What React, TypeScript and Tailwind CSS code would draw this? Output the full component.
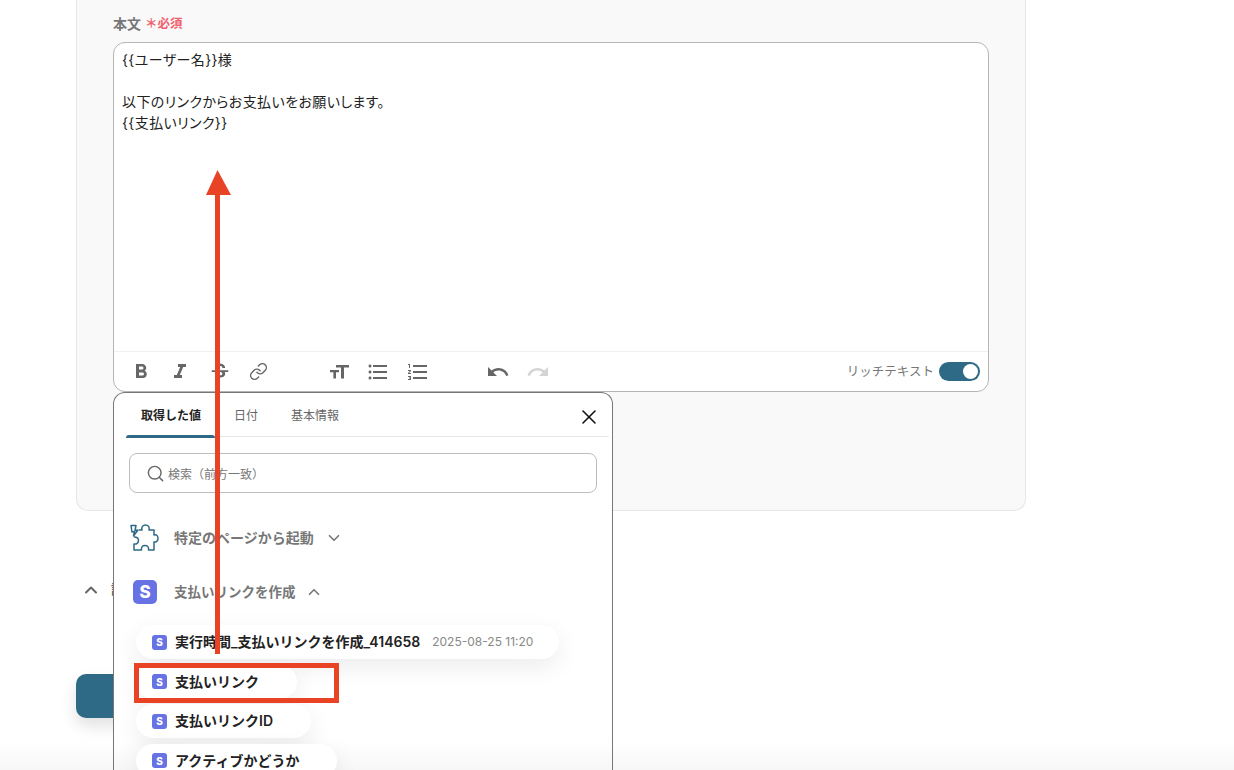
import { ChevronDown, ChevronUp, Link, Search, X } from 'lucide-react';
import {
    MdFormatBold,
    MdFormatItalic,
    MdFormatListBulleted,
    MdFormatListNumbered,
    MdRedo,
    MdStrikethroughS,
    MdUndo,
} from 'react-icons/md';

const fontClass = "font-['Inter','Noto_Sans_CJK_JP',sans-serif]";

function TextSizeIcon() {
    return (
        <svg width="20" height="20" viewBox="0 0 20 20" fill="#666">
            <path d="M7 3h13v2.600h-5v11h-3v-11H7z" />
            <path d="M1 8h9v2.300H7v6.300H4.400v-6.300H1z" />
        </svg>
    );
}

function PuzzleIcon() {
    return (
        <svg width="30" height="30" viewBox="0 0 30 30" fill="none" stroke="#2e6a85" strokeWidth="1.500" strokeLinejoin="round">
            <path d="M10 7H13C12 4 14 2 16.500 2C19 2 21 4 20 7H25V12C28 11 29 13.500 29 15.500C29 18 27 19.500 25 19V27H19.500C20 24 18.500 22.500 16 22.500C13.500 22.500 12 24 12.500 27H5V21C7.500 21.500 9.500 20 9.500 17.500C9.500 15 7.500 14 5 14" />
            <path d="M7 2.500H2L3 9L5.500 8.500L4.500 13L9 7L6 7.500Z" />
        </svg>
    );
}

function StripeBadge({ large }: { large?: boolean }) {
    if (large) {
        return (
            <span className="flex h-[24px] w-[24px] items-center justify-center rounded-[5px] bg-[#6772e5] text-[17px] font-extrabold leading-none text-white">
                S
            </span>
        );
    }
    return (
        <span className="flex h-[15px] w-[15px] shrink-0 items-center justify-center rounded-[3px] bg-[#6772e5] text-[10px] font-extrabold leading-none text-white">
            S
        </span>
    );
}

function ValuePill({ label, time }: { label: string; time?: string }) {
    return (
        <div className={`flex h-[34px] w-fit items-center rounded-full bg-white pl-[16px] shadow-[0_8px_24px_rgba(0,0,0,0.08)] ${time ? 'pr-[26px]' : 'pr-[38px]'}`}>
            <StripeBadge />
            <span className="ml-[8px] pb-[1px] text-[14px] font-semibold text-[#222]">{label}</span>
            {time && <span className="ml-[12px] text-[12px] text-[#888]">{time}</span>}
        </div>
    );
}

function ToolButton({ children, faded }: { children: React.ReactNode; faded?: boolean }) {
    return (
        <span className={`flex w-[39.500px] items-center justify-center ${faded ? 'text-[#d4d4d4]' : 'text-[#666]'}`}>
            {children}
        </span>
    );
}

export default function App() {
    return (
        <div className={`relative h-[770px] w-[1234px] overflow-hidden bg-white ${fontClass}`}>
            {/* Form card */}
            <div className="ml-[76px] h-[511px] w-[950px] rounded-b-[12px] border border-t-0 border-[#e6e6e6] bg-[#f9f9f9] pl-[36px] pt-[14px]">
                <div className="flex h-[18px] items-center text-[14px] font-semibold text-[#777]">
                    本文
                    <span className="ml-[4px] pt-[3px] text-[12.500px] font-semibold text-[#f0606c]">＊必須</span>
                </div>
                <div className="mt-[10px] flex h-[350px] w-[876px] flex-col rounded-[12px] border border-[#b5b5b5] bg-white">
                    <div className="flex-1 px-[8px] pt-[6px] text-[14px] leading-[21px] tracking-[0.4px] text-[#222] [font-feature-settings:'palt']">
                        <p>{'{{ユーザー名}}様'}</p>
                        <p>&nbsp;</p>
                        <p>以下のリンクからお支払いをお願いします。</p>
                        <p>{'{{支払いリンク}}'}</p>
                    </div>
                    <div className="flex h-[40px] items-center border-t border-[#f0f0f0] pl-[7px] pr-[8px]">
                        <ToolButton><MdFormatBold size={24} /></ToolButton>
                        <ToolButton><MdFormatItalic size={24} /></ToolButton>
                        <ToolButton><MdStrikethroughS size={22} /></ToolButton>
                        <ToolButton><Link size={19} strokeWidth={1.8} className="-translate-x-[1px]" /></ToolButton>
                        <span className="w-[40px]" />
                        <ToolButton><TextSizeIcon /></ToolButton>
                        <ToolButton><MdFormatListBulleted size={24} /></ToolButton>
                        <ToolButton><MdFormatListNumbered size={24} /></ToolButton>
                        <span className="w-[41px]" />
                        <ToolButton><MdUndo size={24} /></ToolButton>
                        <ToolButton faded><MdRedo size={24} /></ToolButton>
                        <span className="ml-auto pt-[2px] text-[12.500px] text-[#777]">リッチテキスト</span>
                        <span className="ml-[5px] flex h-[19px] w-[41px] items-center justify-end rounded-full bg-[#2e6a85] pr-[2px]">
                            <span className="h-[15px] w-[15px] rounded-full bg-white" />
                        </span>
                    </div>
                </div>
            </div>

            {/* Collapsed section behind the popup */}
            <div className="ml-[81px] mt-[70px] flex h-[18px] items-center text-[#666]">
                <ChevronUp size={20} strokeWidth={2.4} />
                <span className="ml-[10px] text-[13px] font-semibold">詳</span>
            </div>

            {/* Save button */}
            <div className="ml-[76px] mt-[75px] h-[44px] w-[200px] rounded-[10px] bg-[#2e6a85] shadow-[0_8px_16px_rgba(0,0,0,0.12)]" />

            {/* Bottom fade of the page */}
            <div className="absolute bottom-0 left-0 right-0 h-[30px] bg-gradient-to-b from-transparent to-[#f7f7f7]" />

            {/* Value picker popup */}
            <div className="absolute left-[113px] top-[392px] h-[378px] w-[500px] overflow-hidden rounded-t-[12px] border border-b-0 border-[#777] bg-gradient-to-b from-white from-[92%] to-[#f7f7f7]">
                <div className="ml-[12px] mr-[3px] flex h-[44px] items-center border-b border-[#e6e6e6] pr-[8px] text-[12px]">
                    <span className="relative flex h-[44px] w-[89px] items-center justify-center pl-[1px] pt-[2px] font-semibold text-[#222]">
                        取得した値
                        <span className="absolute bottom-[-1px] left-0 right-0 h-[3px] rounded-t-[3px] bg-[#2e6a85]" />
                    </span>
                    <span className="ml-[19px] pt-[2px] text-[#666]">日付</span>
                    <span className="ml-[33px] pt-[2px] text-[#666]">基本情報</span>
                    <X size={24} className="ml-auto mt-[4px] text-[#111]" strokeWidth={1.6} />
                </div>
                <div className="mx-[15px] mt-[16px] flex h-[40px] w-[468px] items-center rounded-[8px] border border-[#bdbdbd] pl-[16px]">
                    <Search size={19} className="text-[#666]" strokeWidth={1.8} />
                    <span className="ml-[3px] pt-[3px] text-[12px] text-[#777]">検索（前方一致）</span>
                </div>
                <div className="ml-[15px] mt-[29px] flex h-[32px] items-center font-semibold text-[#777]">
                    <PuzzleIcon />
                    <span className="ml-[15px] pb-[2px] text-[14px]">特定のページから起動</span>
                    <ChevronDown size={18} className="ml-[11px]" strokeWidth={2.2} />
                </div>
                <div className="ml-[19px] mt-[22px] flex h-[32px] items-center font-semibold text-[#777]">
                    <StripeBadge large />
                    <span className="ml-[17px] text-[13.500px]">支払いリンクを作成</span>
                    <ChevronUp size={18} className="ml-[9px]" strokeWidth={2.2} />
                </div>
                <div className="ml-[22px] mt-[17px] flex flex-col gap-[5.500px]">
                    <ValuePill label="実行時間_支払いリンクを作成_414658" time="2025-08-25 11:20" />
                    <ValuePill label="支払いリンク" />
                    <ValuePill label="支払いリンクID" />
                    <ValuePill label="アクティブかどうか" />
                </div>
            </div>

            {/* Annotation: arrow and highlight */}
            <svg className="absolute left-[200px] top-[165px]" width="40" height="495" viewBox="0 0 40 495">
                <rect x="15" y="25" width="5" height="464" fill="#e94326" />
                <path d="M6 30 L17.500 5 L31 30 Z" fill="#e94326" />
            </svg>
            <div className="absolute left-[134px] top-[663px] h-[40px] w-[205px] border-[5px] border-[#e94326]" />
        </div>
    );
}
